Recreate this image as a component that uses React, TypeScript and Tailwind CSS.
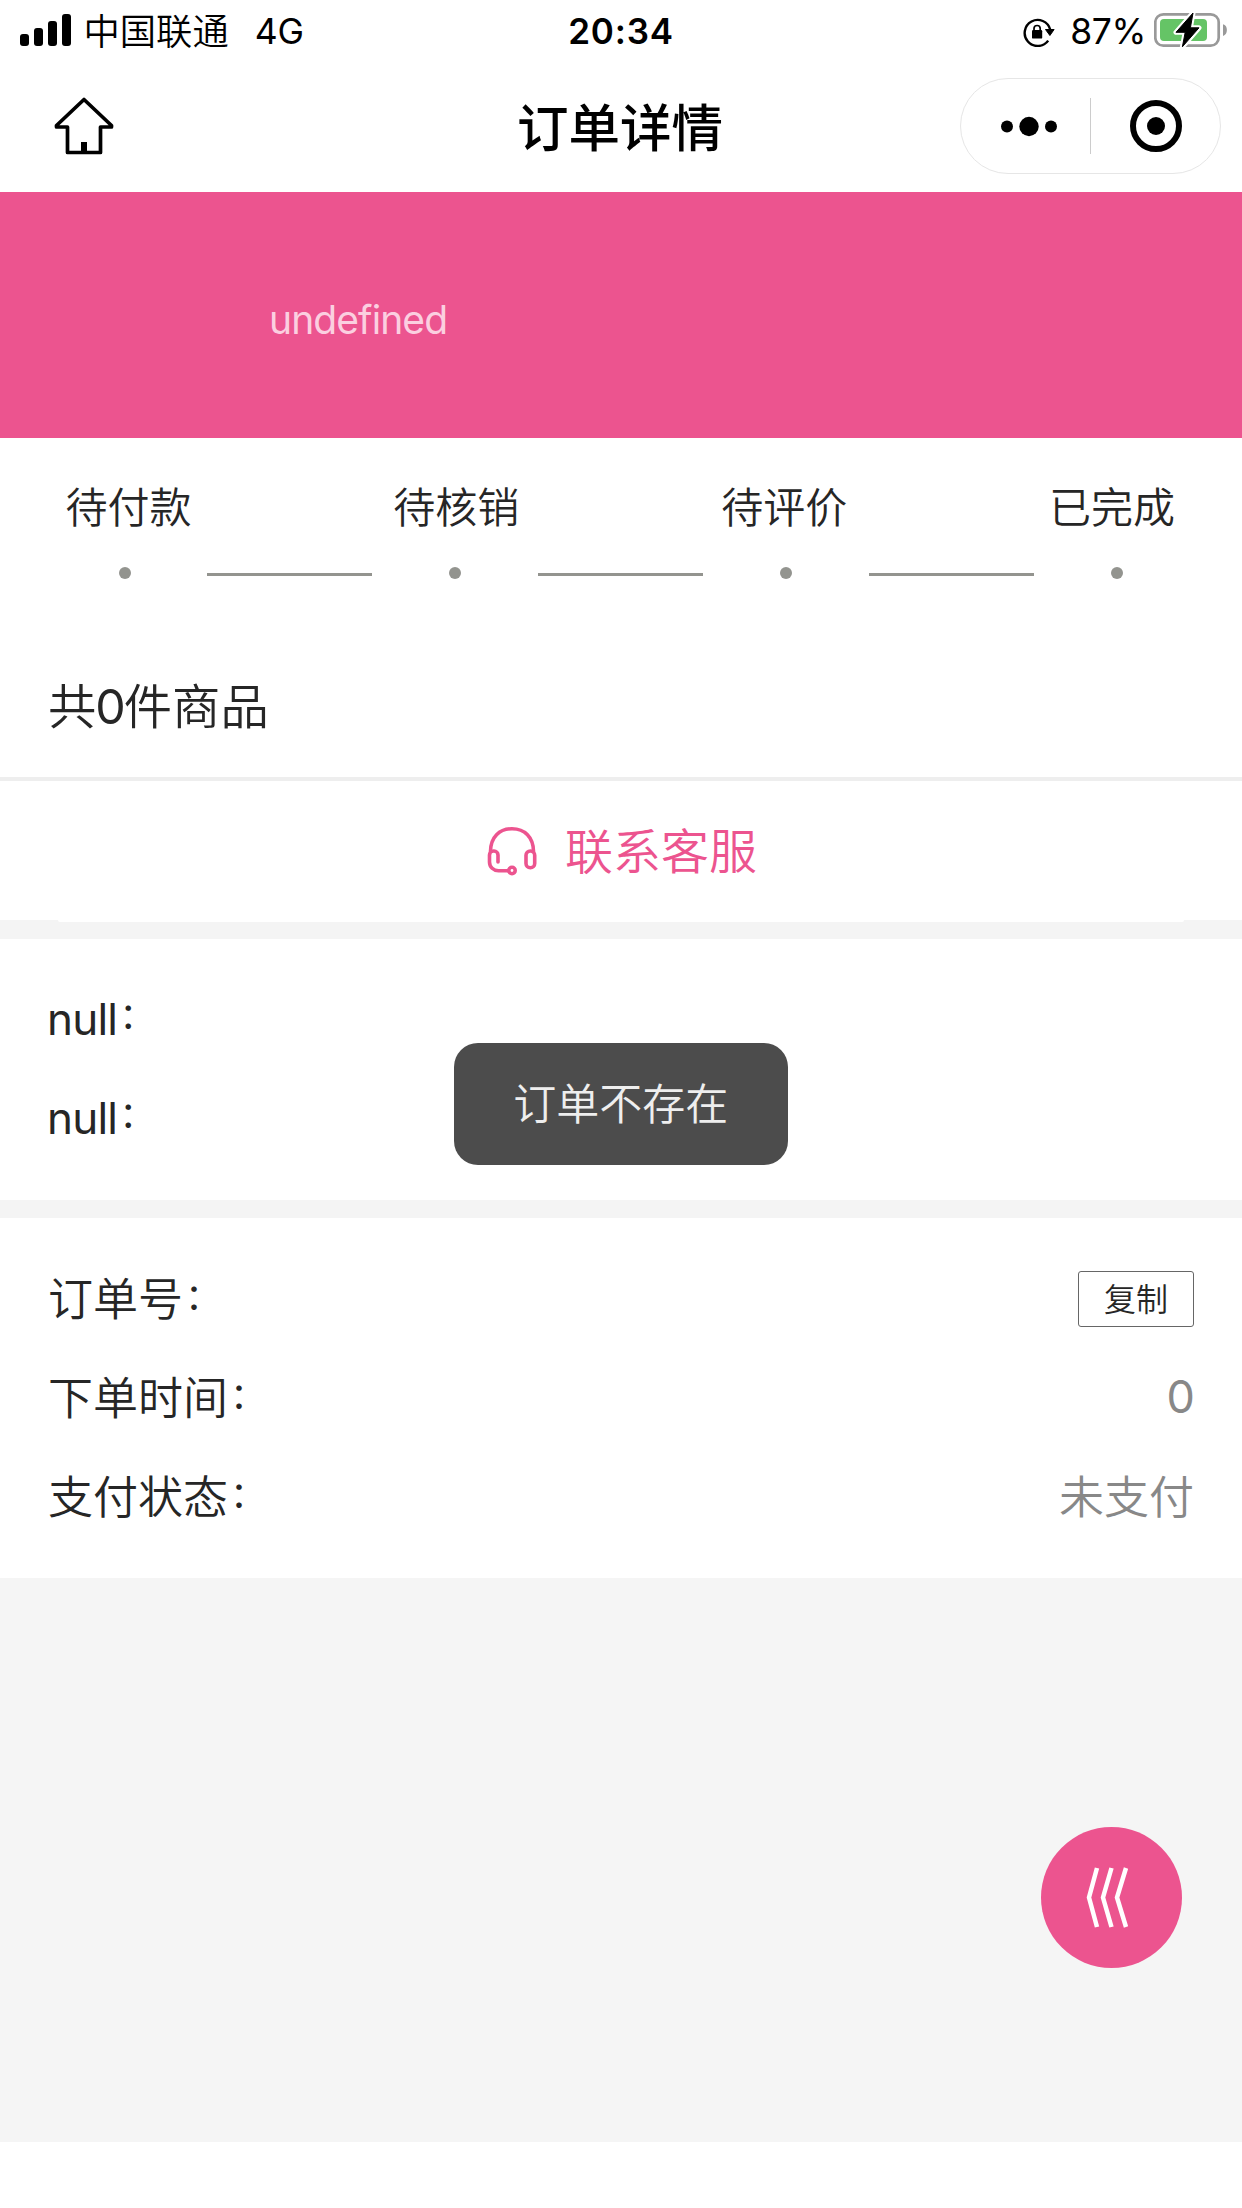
const steps = ['待付款', '待核销', '待评价', '已完成'];

function StatusBar() {
  return (
    <div className="relative flex h-[62px] items-start justify-between pl-5 pr-[14px]">
      <div className="flex items-start">
        <svg className="mt-[14px] h-8 w-[51px]" viewBox="0 0 51 32">
          <rect x="0" y="20" width="9" height="12" rx="3" />
          <rect x="14" y="14" width="9" height="18" rx="3" />
          <rect x="28" y="7" width="9" height="25" rx="3" />
          <rect x="42" y="0" width="9" height="32" rx="3" />
        </svg>
        <span className="ml-[12.5px] mt-[4px] font-[350] text-[36.3px] leading-[50px]">中国联通</span>
        <span className="ml-[26px] mt-[7px] font-[Inter] text-[35.500px] leading-[50px]">4G</span>
      </div>
      <div className="absolute left-1/2 top-[6px] -translate-x-1/2 font-[Inter] text-[35px] font-semibold leading-[50px] tracking-[0.8px]">20:34</div>
      <div className="flex items-start">
        <svg className="mt-[16px] h-[31px] w-[32px]" viewBox="0 0 32 31">
          <path d="M25.2 24.6A13 13 0 1 1 27.2 13.5" fill="none" stroke="#000" strokeWidth="2.4" />
          <path d="M22.5 13.5h8.6l-4.2 6z" stroke="#000" strokeLinejoin="round" />
          <rect x="9" y="14" width="10.2" height="8.6" rx="1.2" />
          <path d="M11 15v-2.4a3.1 3.1 0 0 1 6.2 0V15" fill="none" stroke="#000" strokeWidth="1.7" />
        </svg>
        <span className="ml-[15px] mt-[7px] font-[Inter] text-[35.500px] leading-[50px] tracking-[-0.4px]">87%</span>
        <svg className="ml-[8px] mt-[11px] h-[38px] w-[74px]" viewBox="0 0 74 38">
          <rect x="1.3" y="3.3" width="63.4" height="31.4" rx="8" fill="none" stroke="#999" strokeWidth="2.7" />
          <rect x="6" y="8" width="47" height="22" rx="4" fill="#65c466" />
          <path d="M69 13.3c5.200 1 5.200 10.600 0 11.600z" fill="#999" />
          <path d="M39 2L22 21.300h9.200L28.400 35.800 45 16.800h-8.600z" fill="#000" stroke="#fff" strokeWidth="5" strokeLinejoin="round" />
          <path d="M39 2L22 21.300h9.200L28.400 35.800 45 16.800h-8.600z" fill="#000" stroke="#000" strokeWidth="1" strokeLinejoin="round" />
        </svg>
      </div>
    </div>
  );
}

function NavBar() {
  return (
    <div className="flex h-[130px] items-start justify-between pl-[53px] pr-[21px]">
      <div className="w-[261px]">
        <svg className="mt-[33px] h-[62px] w-[62px]" viewBox="0 0 62 62" fill="none" stroke="#000" strokeWidth="3.700" strokeLinejoin="round">
          <path d="M31 4.500L3.500 30.500V32H14.500V57.500H47.500V32H58.500V30.500Z" />
          <path d="M31 47v10" strokeWidth="6" />
        </svg>
      </div>
      <h1 className="mt-[28px] -ml-[34px] text-[51.500px] font-medium leading-[70px]">订单详情</h1>
      <div className="mt-4 flex h-24 w-[261px] items-center rounded-full border border-[#e6e6e6]">
        <svg className="h-24 w-[129px]" viewBox="0 0 129 96">
          <circle cx="46" cy="48.500" r="6" />
          <circle cx="68" cy="48.500" r="9.700" />
          <circle cx="90" cy="48.500" r="6" />
        </svg>
        <div className="h-14 w-px bg-[#ccc]" />
        <svg className="h-24 w-[129px]" viewBox="0 0 129 96">
          <circle cx="65" cy="48" r="23" fill="none" stroke="#000" strokeWidth="6" />
          <circle cx="65" cy="48" r="9" />
        </svg>
      </div>
    </div>
  );
}

function Progress() {
  return (
    <section className="h-[204px] pt-[32px] text-[#262626]">
      <div className="flex justify-between pl-[65.5px] pr-[67px]">
        {steps.map((s) => (
          <span key={s} className="text-[42px] font-[350] leading-[70px]">{s}</span>
        ))}
      </div>
      <div className="mt-[26px] flex h-[14px] items-center justify-between pl-[118.5px] pr-[119px]">
        {steps.map((s, i) => (
          <div key={s} className="contents">
            {i > 0 && <div className="mt-[3px] h-[3px] w-[165px] bg-[#93948f]" />}
            <div className="h-3 w-3 rounded-full bg-[#93948f]" />
          </div>
        ))}
      </div>
    </section>
  );
}

function Label({ children }: { children: string }) {
  return (
    <span className="flex">
      {children}
      <span className="-mt-[3px] ml-[2px] text-[36px] font-normal">：</span>
    </span>
  );
}

export default function App() {
  return (
    <main className="relative h-[2208px] w-[1242px] overflow-hidden bg-white font-['Noto_Sans_CJK_SC',sans-serif] text-black">
      <StatusBar />
      <NavBar />

      <section className="h-[246px] bg-[#ec548f] pl-[269px] pt-[98px]">
        <p className="font-[Inter] text-[39px] leading-[60px] tracking-[-0.9px] text-[#fbcfe0]">undefined</p>
      </section>

      <Progress />

      <section className="h-[135px] pl-12 pt-[26px] text-[48.300px] font-[350] leading-[70px] text-[#262626]">
        共<span className="-ml-px inline-block font-[Inter] font-normal tracking-[-2px]">0</span>件商品
      </section>

      <div className="h-[143px] border-t-4 border-[#eee]">
        <button className="flex h-[139px] w-full items-center justify-center gap-[28px] pl-[2px] text-[#ec548f]">
          <svg className="h-[50px] w-[50px]" viewBox="0 0 50 50" fill="none" stroke="currentColor" strokeWidth="3.600" strokeLinecap="round">
            <path d="M3.500 25.500C3.500 11 12.500 2.700 25 2.700S46.500 11 46.500 25.500" />
            <path d="M11 36V29a4 4 0 0 0-4-4H6.500a4 4 0 0 0-4 4v7c0 5 4 8.700 9 8.700h9.500" />
            <rect x="39" y="25" width="8.700" height="16.800" rx="4.300" />
            <circle cx="25" cy="44.500" r="3.200" />
          </svg>
          <span className="-mt-[5px] text-[48px] font-[350] leading-[70px]">联系客服</span>
        </button>
      </div>
      <div className="h-[19px] bg-[#f4f4f4] px-[58px]">
        <div className="h-[2px] rounded-b-sm bg-white" />
      </div>

      <section className="flex h-[261px] flex-col gap-[29px] pl-[47px] pt-[45px] text-[44px] leading-[70px] text-[#262626]">
        <div className="flex h-[70px] font-['Inter','Noto_Sans_CJK_SC',sans-serif] tracking-[-0.8px]">
          <Label>null</Label>
        </div>
        <div className="flex h-[70px] font-['Inter','Noto_Sans_CJK_SC',sans-serif] tracking-[-0.8px]">
          <Label>null</Label>
        </div>
      </section>

      <div className="h-[18px] bg-[#f4f4f4]" />

      <section className="flex h-[360px] flex-col gap-[29px] pl-12 pr-12 pt-[44px] text-[45px] font-[350] leading-[70px] text-[#262626]">
        <div className="flex h-[70px] items-center justify-between">
          <Label>订单号</Label>
          <button className="mt-[4px] h-14 w-[116px] rounded-[3px] border border-[#666] pb-1 text-[32px] font-[350] leading-[50px] text-[#262626]">复制</button>
        </div>
        <div className="flex h-[70px] items-center justify-between">
          <Label>下单时间</Label>
          <span className="mt-[2px] font-[Inter] font-normal tracking-[-1px] text-[#888]">0</span>
        </div>
        <div className="flex h-[70px] items-center justify-between">
          <Label>支付状态</Label>
          <span className="text-[#888]">未支付</span>
        </div>
      </section>

      <div className="h-[564px] bg-[#f5f5f5]" />

      <div className="absolute left-[453.5px] top-[1042.5px] flex h-[122.5px] w-[334.5px] items-center justify-center rounded-[24px] bg-[#4c4c4c] pb-[5px] text-[43px] font-[350] leading-[70px] text-[#eee]">订单不存在</div>

      <button className="absolute left-[1041px] top-[1827px] h-[141px] w-[141px] rounded-full bg-[#ec548f]">
        <svg className="h-[141px] w-[141px]" viewBox="0 0 141 141" fill="none" stroke="#fff" strokeWidth="4.500">
          <path d="M56 41L48 70.500L56 100M70.500 41L62 70.500L70.500 100M85 41L76 70.500L85 100" />
        </svg>
      </button>
    </main>
  );
}
